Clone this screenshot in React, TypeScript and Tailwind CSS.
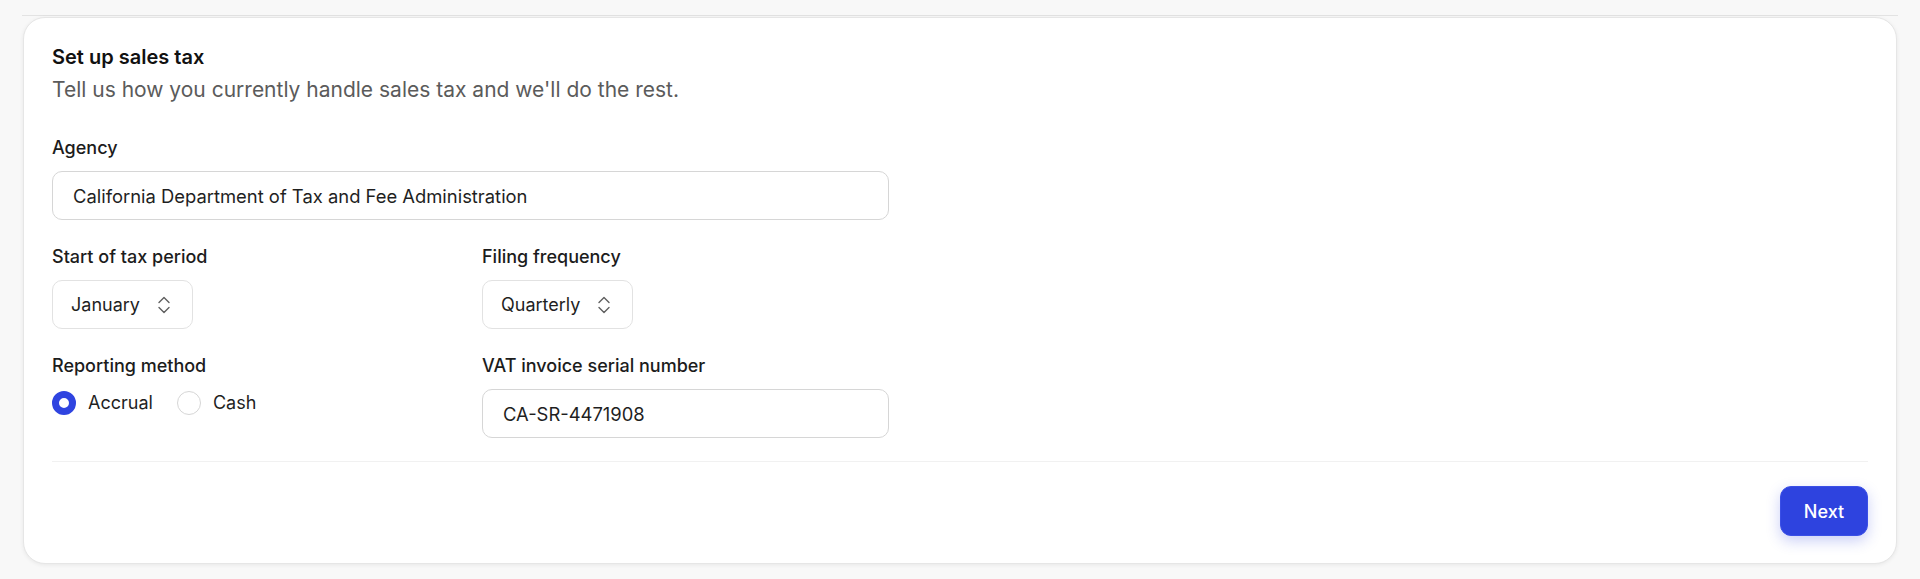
import React from "react";

const Chevrons = () => (
  <svg width="12" height="18" viewBox="0 0 12 18" fill="none" stroke="#5f5f5f" strokeWidth="1.4" strokeLinecap="round" strokeLinejoin="round">
    <path d="M1 6.5 L6 1.5 L11 6.5" />
    <path d="M1 11.5 L6 16.5 L11 11.5" />
  </svg>
);

const Label = ({ children }: { children: React.ReactNode }) => (
  <label className="block text-[18px] leading-[28px] font-medium text-[#1c1c1c]">{children}</label>
);

const Select = ({ value }: { value: string }) => (
  <button className="mt-[9px] flex h-[49px] items-center gap-[18px] rounded-[10px] border border-[#e2e2e2] bg-white pl-[18px] pr-[22px] text-[18px] text-[#1f1f1f]">
    <span>{value}</span>
    <Chevrons />
  </button>
);

const Radio = ({ checked, label }: { checked?: boolean; label: string }) => (
  <label className="flex items-center gap-[12px] text-[18px] leading-[24px] text-[#1f1f1f]">
    {checked ? (
      <span className="h-[24px] w-[24px] rounded-full border-[7px] border-[#2f44e0] bg-white" />
    ) : (
      <span className="h-[24px] w-[24px] rounded-full border border-[#d6d6d6] bg-white" />
    )}
    {label}
  </label>
);

export default function App() {
  return (
    <div className="min-h-screen bg-[#f8f8f8] px-[23px] pt-[15px] font-['Inter',sans-serif]">
      <div className="-mx-px h-px bg-[#e3e3e3]" />
      <div className="mt-px rounded-[22px] border border-[#e6e6e6] bg-white px-[28px] pt-[25px] pb-[27px] shadow-[0_1px_4px_rgba(0,0,0,0.07)]">
        {/* Header */}
        <h2 className="text-[20px] leading-[28px] font-semibold text-[#111111]">Set up sales tax</h2>
        <p className="mt-[5px] text-[21px] leading-[28px] text-[#5b5b5b]">
          Tell us how you currently handle sales tax and we'll do the rest.
        </p>

        {/* Form */}
        <div className="mt-[30px] grid w-[837px] grid-cols-2 gap-x-[23px] gap-y-[23px]">
          <div className="col-span-2">
            <Label>Agency</Label>
            <input
              readOnly
              value="California Department of Tax and Fee Administration"
              className="mt-[9px] h-[49px] w-full rounded-[10px] border border-[#d6d6d6] bg-white pl-[20px] text-[18.4px] text-[#1f1f1f] outline-none"
            />
          </div>

          <div>
            <Label>Start of tax period</Label>
            <Select value="January" />
          </div>
          <div>
            <Label>Filing frequency</Label>
            <Select value="Quarterly" />
          </div>

          <div>
            <Label>Reporting method</Label>
            <div className="mt-[11px] flex items-center gap-[24px]">
              <Radio checked label="Accrual" />
              <Radio label="Cash" />
            </div>
          </div>
          <div>
            <Label>VAT invoice serial number</Label>
            <input
              readOnly
              value="CA-SR-4471908"
              className="mt-[9px] h-[49px] w-full rounded-[10px] border border-[#d6d6d6] bg-white pl-[20px] text-[18.4px] text-[#1f1f1f] outline-none"
            />
          </div>
        </div>

        <div className="mt-[23px] h-px bg-[#f1f1f1]" />

        {/* Footer */}
        <div className="mt-[24px] flex justify-end">
          <button className="h-[50px] w-[88px] rounded-[11px] border border-[#3a4fe6] bg-[#2e43df] text-[18px] font-medium text-white shadow-[0_5px_14px_rgba(46,67,223,0.25)]">
            Next
          </button>
        </div>
      </div>
    </div>
  );
}
